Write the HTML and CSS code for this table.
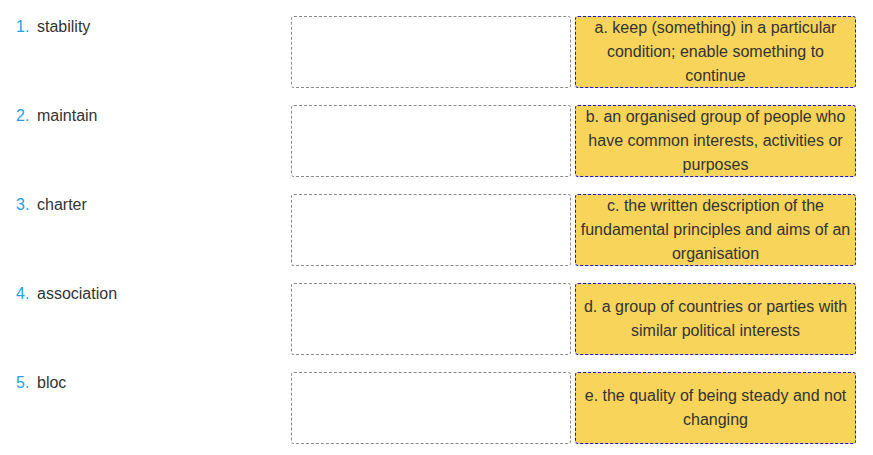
FILE: index.html
```html
<!DOCTYPE html>
<html>
<head>
<meta charset="utf-8">
<link rel="stylesheet" href="styles.css">
</head>
<body>
<div class="quiz">
  <div class="row">
    <div class="term"><span class="num">1.</span><span class="word">stability</span></div>
    <div class="drop"></div>
    <div class="def"><span>a. keep (something) in a particular condition; enable something to continue</span></div>
  </div>
  <div class="row">
    <div class="term"><span class="num">2.</span><span class="word">maintain</span></div>
    <div class="drop"></div>
    <div class="def"><span>b. an organised group of people who have common interests, activities or purposes</span></div>
  </div>
  <div class="row">
    <div class="term"><span class="num">3.</span><span class="word">charter</span></div>
    <div class="drop"></div>
    <div class="def"><span>c. the written description of the fundamental principles and aims of an organisation</span></div>
  </div>
  <div class="row">
    <div class="term"><span class="num">4.</span><span class="word">association</span></div>
    <div class="drop"></div>
    <div class="def"><span>d. a group of countries or parties with similar political interests</span></div>
  </div>
  <div class="row">
    <div class="term"><span class="num">5.</span><span class="word">bloc</span></div>
    <div class="drop"></div>
    <div class="def"><span>e. the quality of being steady and not changing</span></div>
  </div>
</div>
</body>
</html>
```
FILE: styles.css
```css
* { box-sizing: border-box; }
html, body { margin: 0; padding: 0; background: #fff; }
body {
  font-family: "Liberation Sans", Arial, sans-serif;
  font-size: 16px;
  color: #333;
}
.quiz {
  display: flex;
  flex-direction: column;
  gap: 17px;
  padding: 16px 0 0 16px;
}
.row {
  display: grid;
  grid-template-columns: 271px 280px 281px;
  grid-template-rows: 72px;
  column-gap: 4px;
  height: 72px;
}
.term {
  line-height: 20px;
  padding-top: 1px;
  display: flex;
}
.num {
  color: #22a0ee;
  width: 21px;
}
.word { color: #333; }
.drop {
  border: 1px dashed #8a8a8a;
  border-radius: 3px;
}
.def {
  background: #f8d45a;
  border: 1px dashed #1010f0;
  border-radius: 3px;
  display: flex;
  align-items: center;
  justify-content: center;
  text-align: center;
  line-height: 24px;
  padding: 0 2px;
  min-height: 0;
  overflow: visible;
}
```
